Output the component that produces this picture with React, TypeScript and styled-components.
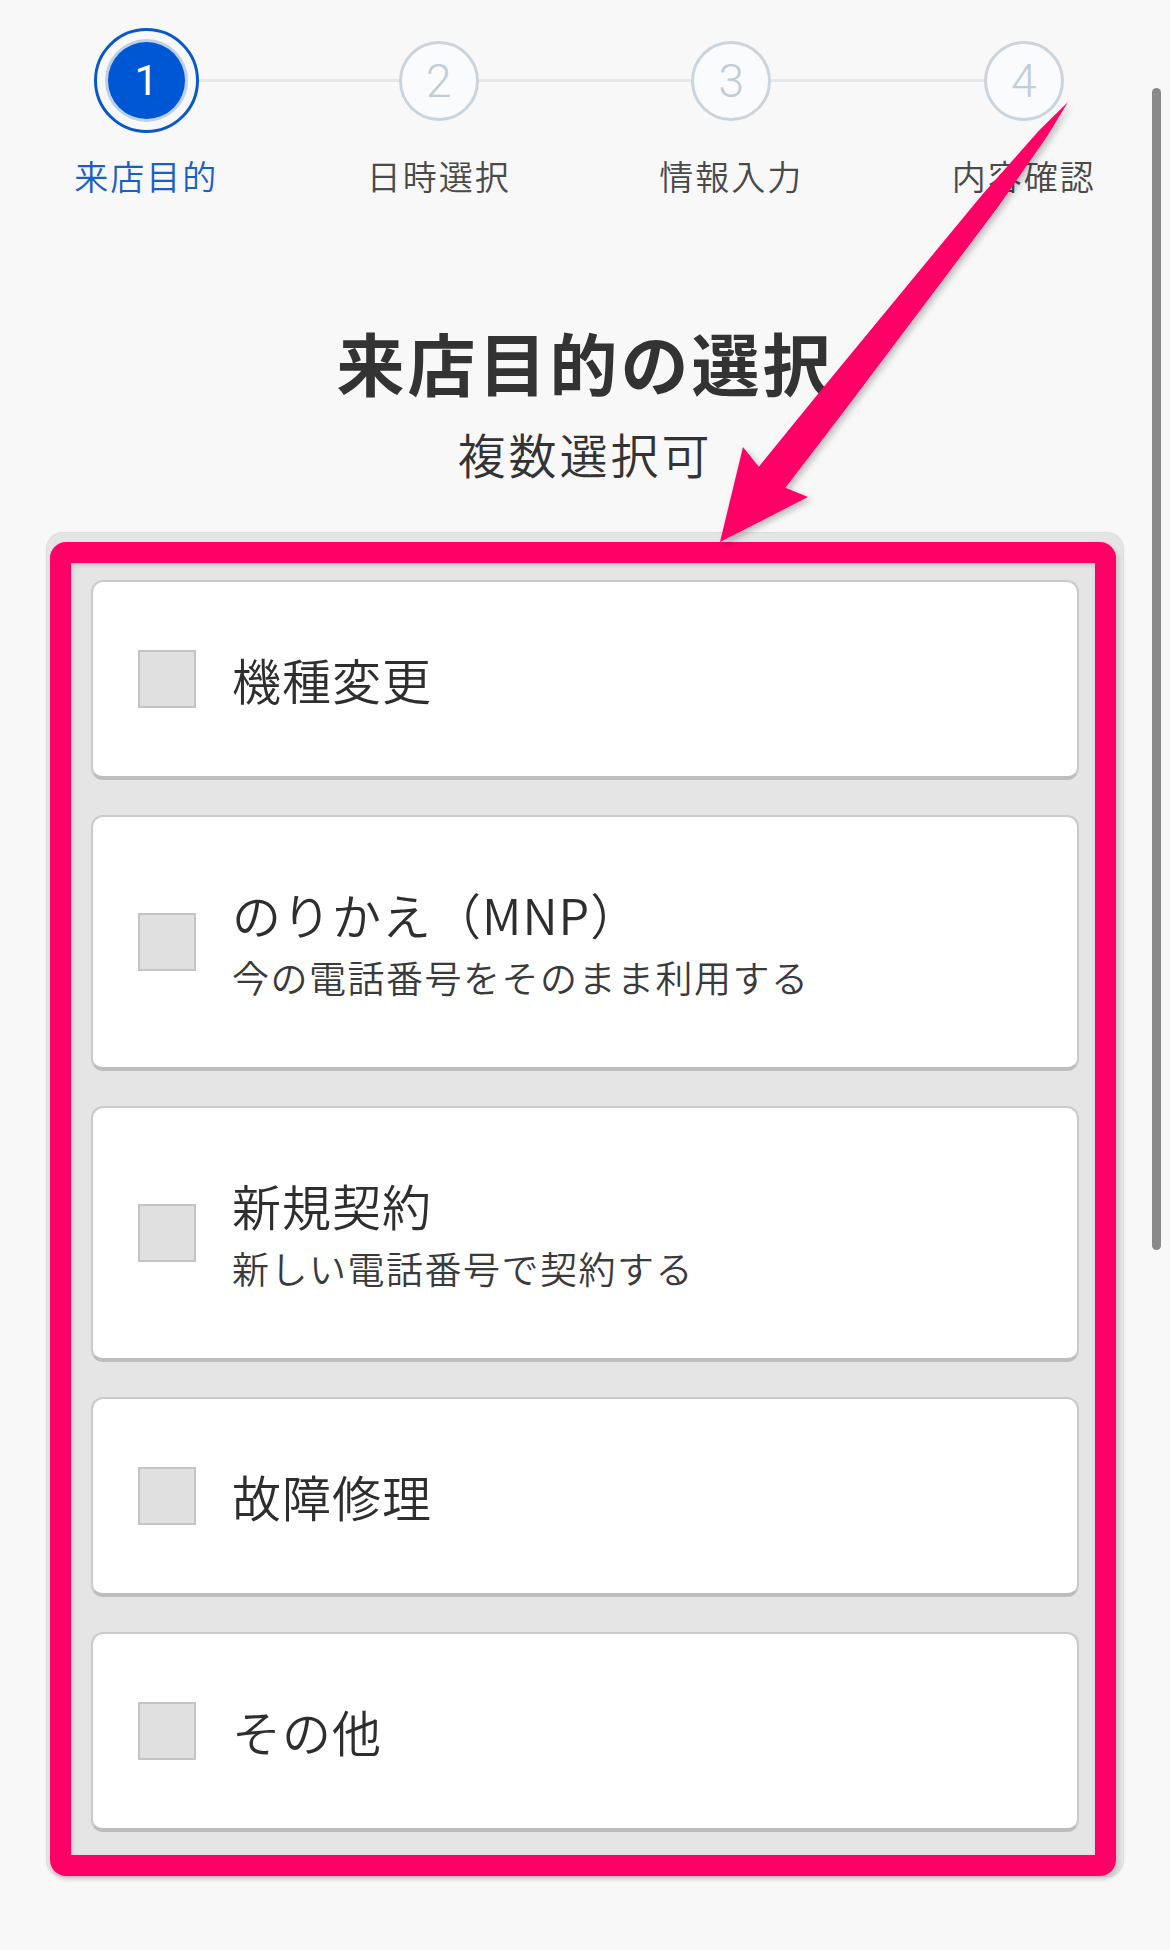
import React from "react";
import styled, { createGlobalStyle } from "styled-components";

const GlobalStyle = createGlobalStyle`
  html, body { margin: 0; padding: 0; background: #f8f8f8; }
  body { font-family: "Noto Sans CJK JP", "Noto Sans", sans-serif; color: #333; }
  * { box-sizing: border-box; }
`;

const Page = styled.div`
  position: relative;
  width: 1170px;
  min-height: 1950px;
  background: #f8f8f8;
  overflow: hidden;
`;

const StepRow = styled.ol`
  display: grid;
  grid-template-columns: repeat(4, 1fr);
  margin: 0;
  padding: 28px 0 0;
  list-style: none;
`;

const Step = styled.li`
  position: relative;
  display: flex;
  flex-direction: column;
  align-items: center;
  &:not(:first-child)::before {
    content: "";
    position: absolute;
    top: 51px;
    left: -50%;
    right: 50%;
    height: 3px;
    background: #e4e8eb;
  }
`;

const CircleSlot = styled.div`
  position: relative;
  z-index: 1;
  height: 105px;
  display: flex;
  align-items: center;
  justify-content: center;
`;

const ActiveRing = styled.div`
  width: 105px;
  height: 105px;
  border: 3px solid #0a57c8;
  border-radius: 50%;
  background: #f8f8f8;
  display: flex;
  align-items: center;
  justify-content: center;
`;

const ActiveDot = styled.div`
  width: 77px;
  height: 77px;
  border-radius: 50%;
  background: #0057d3;
  box-shadow: 0 0 0 3px rgba(170, 195, 228, 0.75);
  color: #fff;
  display: flex;
  align-items: center;
  justify-content: center;
  font-family: Roboto, "Liberation Sans", sans-serif;
  font-weight: 400;
  font-size: 42px;
  line-height: 1;
`;

const PendingCircle = styled.div`
  width: 80px;
  height: 80px;
  border: 3px solid #c9d4dd;
  border-radius: 50%;
  background: #fafbfc;
  color: #c0cdd8;
  display: flex;
  align-items: center;
  justify-content: center;
  font-family: Roboto, "Liberation Sans", sans-serif;
  font-weight: 300;
  font-size: 46px;
  line-height: 1;
`;

const StepLabel = styled.span<{ $active?: boolean }>`
  margin-top: 23px;
  font-size: 34px;
  line-height: 40px;
  letter-spacing: 2px;
  font-weight: 350;
  color: ${(p) => (p.$active ? "#1a5fc6" : "#4a4a4a")};
`;

const Heading = styled.header`
  display: flex;
  flex-direction: column;
  align-items: center;
  margin-top: 126px;
`;

const Title = styled.h1`
  margin: 0;
  font-size: 68px;
  line-height: 80px;
  font-weight: 700;
  letter-spacing: 3px;
  color: #333;
`;

const Subtitle = styled.p`
  margin: 21px 0 0;
  font-size: 48px;
  line-height: 60px;
  letter-spacing: 3px;
  font-weight: 350;
  color: #333;
`;

const Panel = styled.div`
  margin: 50px 47px 0;
  padding: 47px 44px 44px;
  background: #e5e5e5;
  border-radius: 16px;
  box-shadow: 0 0 0 1px #dedede, 0 1px 4px rgba(0, 0, 0, 0.08);
  display: flex;
  flex-direction: column;
  gap: 35px;
`;

const Card = styled.label`
  display: flex;
  align-items: center;
  gap: 36px;
  padding: 62px 45px;
  background: #fff;
  border: 2px solid #cacaca;
  border-bottom: 4px solid #bdbdbd;
  border-radius: 12px;
`;

const Box = styled.span`
  flex: none;
  width: 58px;
  height: 58px;
  background: #e0e0e0;
  border: 2px solid #c4c4c4;
`;

const TextBlock = styled.span`
  display: flex;
  flex-direction: column;
`;

const MainText = styled.span`
  font-size: 49px;
  line-height: 70px;
  letter-spacing: 1px;
  font-weight: 350;
  color: #2e2e2e;
`;

const SubText = styled.span`
  font-size: 37px;
  line-height: 56px;
  letter-spacing: 1.5px;
  font-weight: 350;
  color: #3a3a3a;
`;

const Scrollbar = styled.div`
  position: absolute;
  top: 88px;
  left: 1152px;
  width: 9px;
  height: 1162px;
  border-radius: 5px;
  background: #8a8a8a;
`;

const Highlight = styled.div`
  position: absolute;
  left: 50px;
  top: 542px;
  width: 1066px;
  height: 1334px;
  border: 21px solid #ff0066;
  border-radius: 16px;
  box-shadow: 2px 3px 5px rgba(0, 0, 0, 0.18), inset 1px 2px 4px rgba(0, 0, 0, 0.18);
  pointer-events: none;
`;

const ArrowLayer = styled.svg`
  position: absolute;
  left: 0;
  top: 0;
  width: 1170px;
  height: 1950px;
  pointer-events: none;
`;

const steps = ["来店目的", "日時選択", "情報入力", "内容確認"];

const options: { main: string; sub?: string }[] = [
  { main: "機種変更" },
  { main: "のりかえ（MNP）", sub: "今の電話番号をそのまま利用する" },
  { main: "新規契約", sub: "新しい電話番号で契約する" },
  { main: "故障修理" },
  { main: "その他" },
];

export default function App() {
  return (
    <Page>
      <GlobalStyle />
      <StepRow>
        {steps.map((s, i) => (
          <Step key={s}>
            <CircleSlot>
              {i === 0 ? (
                <ActiveRing>
                  <ActiveDot>1</ActiveDot>
                </ActiveRing>
              ) : (
                <PendingCircle>{i + 1}</PendingCircle>
              )}
            </CircleSlot>
            <StepLabel $active={i === 0}>{s}</StepLabel>
          </Step>
        ))}
      </StepRow>

      <Heading>
        <Title>来店目的の選択</Title>
        <Subtitle>複数選択可</Subtitle>
      </Heading>

      <Panel>
        {options.map((o) => (
          <Card key={o.main}>
            <Box />
            <TextBlock>
              <MainText>{o.main}</MainText>
              {o.sub && <SubText>{o.sub}</SubText>}
            </TextBlock>
          </Card>
        ))}
      </Panel>

      <Scrollbar />
      <Highlight />
      <ArrowLayer viewBox="0 0 1170 1950">
        <defs>
          <filter id="arrowShadow" x="-20%" y="-20%" width="140%" height="140%">
            <feDropShadow dx="3" dy="3" stdDeviation="3" floodColor="#000" floodOpacity="0.25" />
          </filter>
        </defs>
        <polygon
          filter="url(#arrowShadow)"
          fill="#ff0066"
          points="1068,102 1047,136.5 998.5,206.3 845,410 785.4,487.7 808,497 720,542 743,447 758.8,466.7 820.6,390.7 982.8,193.9 1039.3,130.3"
        />
      </ArrowLayer>
    </Page>
  );
}
